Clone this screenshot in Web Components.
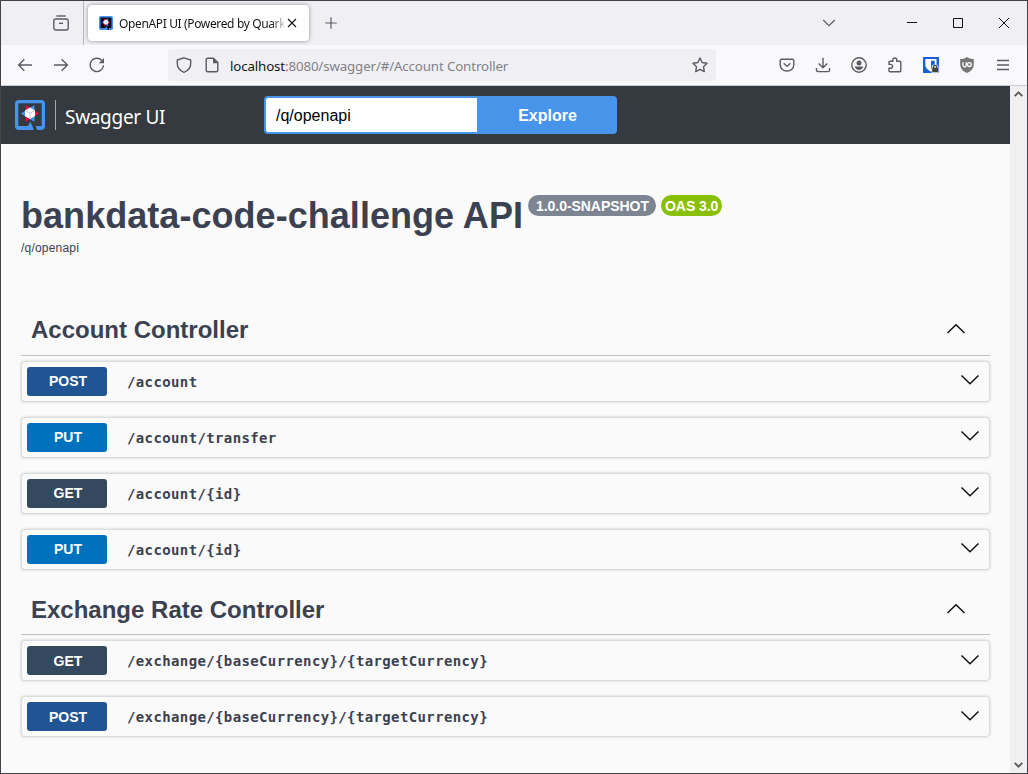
<!DOCTYPE html>
<html lang="en">
<head>
<meta charset="utf-8">
<title>OpenAPI UI (Powered by Quarkus)</title>
<style>
html, body { margin: 0; height: 100%; overflow: hidden; }
body { font-family: "Liberation Sans", Arial, sans-serif; }
</style>
</head>
<body>
<browser-window>
  <tab-strip slot="tabs"></tab-strip>
  <nav-bar slot="nav"></nav-bar>
  <swagger-topbar></swagger-topbar>
  <api-info></api-info>
  <api-section heading="Account Controller">
    <api-operation method="POST">/account</api-operation>
    <api-operation method="PUT">/account/transfer</api-operation>
    <api-operation method="GET">/account/{id}</api-operation>
    <api-operation method="PUT">/account/{id}</api-operation>
  </api-section>
  <api-section heading="Exchange Rate Controller" class="second">
    <api-operation method="GET">/exchange/{baseCurrency}/{targetCurrency}</api-operation>
    <api-operation method="POST">/exchange/{baseCurrency}/{targetCurrency}</api-operation>
  </api-section>
</browser-window>
<script>
const define = (name, render) => customElements.define(name, class extends HTMLElement {
  constructor() { super(); this.attachShadow({ mode: 'open' }); }
  connectedCallback() { this.shadowRoot.innerHTML = render(this); }
});

const quarkus = bg => `<rect width="30" height="30" rx="4" fill="#4695eb"/><path d="M3.300 3.300h23.400v22.700H3.300z" fill="${bg}"/><path d="M15.300 21.500L19 30h-8z" fill="#4695eb"/><path d="M17.300 26h3.200l1.700 4H19z" fill="${bg}"/>
<path d="M10.600 5.200l4.400 2.500-4.500 3zM24.200 13.500l-4.700-3v6zM10.600 21.800l-.3-5.200 4.700 2.700z" fill="#ff004a"/><path d="M19.400 5.200L15 7.700l4.500 3zM5.800 13.500l4.700-3v6zM19.400 21.800l.3-5.200-4.700 2.700z" fill="#4695eb"/><path d="M15 7.600l5 2.900v5.700L15 19l-5-2.800v-5.700z" fill="#fff"/><path d="M10 10.600l5 2.700 5-2.700M15 13.300V19" stroke="#bcc3cf" fill="none" stroke-width=".9"/>`;

const icons = {
  archive: '<path d="M3.3 1h9.4"/><rect x=".8" y="4" width="14.4" height="11" rx="2"/><path d="M6 8.3h4"/>',
  close: '<path d="M4 4l8 8M12 4l-8 8" stroke-width="1.1"/>',
  plus: '<path d="M8 2.2v11.6M2.2 8h11.6" stroke-width="1.2"/>',
  chevron: '<path d="M2.2 5l5.8 5.7L13.8 5" stroke-width="1.2"/>',
  minimize: '<path d="M3 7.5h10" stroke-width="1" shape-rendering="crispEdges"/>',
  maximize: '<path d="M3.5 3.5h9v9h-9z" stroke-width="1"/>',
  quit: '<path d="M3 3l10 10M13 3L3 13" stroke-width="1"/>',
  back: '<path d="M15 8H1.6M7.3 2.3L1.6 8l5.7 5.7"/>',
  forward: '<path d="M1 8h13.4M8.7 2.3L14.4 8l-5.7 5.7"/>',
  reload: '<path d="M12.7 3.3A6.7 6.7 0 1 0 14.5 8.3"/><path d="M15 1v5.3H9.7z" fill="currentColor" stroke="none"/>',
  shield: '<path d="M8 .8L14.7 3v3.5c0 4.2-2.6 7.3-6.7 8.8C3.9 13.8 1.3 10.7 1.3 6.5V3z"/>',
  page: '<path d="M3.5 1.2h6L13.8 5.500v7.8c0 .8-.6 1.500-1.500 1.500H3.7c-.8 0-1.500-.7-1.500-1.500V2.700c0-.8.6-1.500 1.300-1.500z"/><path d="M9 1v5.200h5z" fill="currentColor" stroke="none"/>',
  star: '<path d="M8 1l2.100 4.500 4.900.7-3.500 3.500.8 4.900L8 12.300l-4.300 2.300.8-4.900L1 6.200l4.900-.7z" stroke-linejoin="round"/>',
  pocket: '<path d="M2.700 2.200h10.600c.9 0 1.500.6 1.500 1.500v4c0 3.800-3 6.300-6.800 6.300S1.200 11.500 1.200 7.700v-4c0-.9.6-1.500 1.500-1.500z"/><path d="M4.700 6.300L8 9.400l3.300-3.100"/>',
  download: '<path d="M8 .8v9.500M3.700 6.500L8 10.800l4.300-4.300M1.500 11v2.300c0 .7.600 1.300 1.300 1.300h10.400c.7 0 1.300-.6 1.300-1.300V11"/>',
  account: '<circle cx="8" cy="8" r="7.200"/><circle cx="8" cy="5.900" r="2.500" fill="currentColor" stroke="none"/><path d="M3.800 9.500h8.400c-.4 2.200-2 3.500-4.200 3.500s-3.800-1.300-4.200-3.500z" fill="currentColor" stroke="none"/>',
  puzzle: '<path d="M2 5.200c0-.6.400-1 1-1h2.800V3a2 2 0 0 1 4 0v1.200h3c.6 0 1 .4 1 1v8.600c0 .6-.4 1-1 1H3c-.6 0-1-.4-1-1v-2.600h1.700a1.900 1.900 0 0 0 0-3.800H2z"/>',
  bitwarden: '<rect width="16" height="16" rx=".5" fill="#175ddc" stroke="none"/><path d="M2.300 2h11.200v6c0 3-2.500 5-5.600 6.700C4.700 13 2.300 11 2.300 8z" fill="#fff" stroke="none"/><path d="M8 3.700h3.700v4.600c0 1.500-1.500 2.700-3.700 4z" fill="#175ddc" stroke="none"/><path d="M8.600 16V10l1-2.200h4.800l1.200 2.200v6z" fill="#dfe6f5" stroke="none"/><rect x="9.200" y="10.700" width="6" height="4.500" fill="#444" stroke="none"/><path d="M10.500 11V9.700c0-1.800 3.300-1.800 3.300 0V11" stroke="#444" stroke-width="1.200"/>',
  ublock: '<path d="M8 0c2 1.500 4 2 6.800 2v5c0 4.500-2.500 7-6.800 9-4.300-2-6.800-4.500-6.800-9V2C4 2 6 1.500 8 0z" fill="#777" stroke="none"/><path d="M4 5.300v3c0 2 3.200 2 3.200 0v-3" stroke="#fff" stroke-width="1.300"/><circle cx="10.400" cy="7.600" r="1.900" stroke="#fff" stroke-width="1.300"/>',
  menu: '<path d="M2 3.500h12M2 8h12M2 12.500h12" stroke-width="1.300"/>',
  quarkus: '<g transform="scale(.533)" stroke="none">' + quarkus('#000a1c') + '</g>'
};
define('ui-icon', e => `<style>
:host{display:block;width:16px;height:16px;flex:none;color:#5b5b66}
svg{display:block;width:100%;height:100%;overflow:visible}
</style><svg viewBox="0 0 16 16" fill="none" stroke="currentColor" stroke-width="1.4">${icons[e.getAttribute('name')]}</svg>`);

define('browser-window', () => `<style>
:host{display:flex;flex-direction:column;box-sizing:border-box;width:1028px;height:774px;border:1px solid #444247;background:#fafafa}
.view{display:flex;flex:1;min-height:0;border-top:1px solid #c8ccce}
main{flex:1;min-width:0;overflow:hidden}
aside{width:17px;background:#f0f0f0;display:flex;flex-direction:column;justify-content:space-between;box-sizing:border-box;padding:5px 4px 5px}
aside svg{width:9px;height:6px}
</style><slot name="tabs"></slot><slot name="nav"></slot>
<div class="view"><main><slot></slot></main><aside>
<svg viewBox="0 0 9 6"><path d="M.7 5.200L4.500 1.400l3.800 3.800" fill="none" stroke="#5c5c5c" stroke-width="1.900"/></svg>
<svg viewBox="0 0 9 6"><path d="M.7.8l3.800 3.800L8.300.8" fill="none" stroke="#5c5c5c" stroke-width="1.900"/></svg>
</aside></div>`);

define('tab-strip', () => `<style>
:host{display:flex;align-items:center;height:44px;flex:none;background:#f0f0f4;font:12px "Noto Sans","Open Sans",sans-serif;color:#15141a}
.tools{width:83px;height:44px;box-sizing:border-box;border-right:1px solid #b5b5ba;padding:14px 0 0 52px}
.tab{display:flex;align-items:center;box-sizing:border-box;width:221px;height:36px;margin-left:4px;border-radius:4px;background:#fff;box-shadow:0 0 4px rgba(0,0,0,.4);padding-left:11px}
.name{width:165px;margin-left:6px;white-space:nowrap;letter-spacing:-.36px;-webkit-mask-image:linear-gradient(90deg,#000 152px,rgba(0,0,0,.2) 165px)}
.tab ui-icon:first-child{width:14px;height:14px}
.x{color:#15141a}
.add{margin-left:14px}
.list{margin-left:482px}
.win{color:#111;margin-left:30px}
</style><div class="tools"><ui-icon name="archive"></ui-icon></div>
<div class="tab"><ui-icon name="quarkus"></ui-icon><span class="name">OpenAPI UI (Powered by Quark</span><ui-icon class="x" name="close"></ui-icon></div>
<ui-icon class="add" name="plus"></ui-icon><ui-icon class="list" name="chevron"></ui-icon>
<ui-icon class="win" name="minimize" style="margin-left:67px"></ui-icon><ui-icon class="win" name="maximize"></ui-icon><ui-icon class="win" name="quit"></ui-icon>`);

define('nav-bar', () => `<style>
:host{display:flex;align-items:center;height:40px;flex:none;background:#f9f9fb;box-sizing:border-box;padding-left:16px;gap:20px}
.url{display:flex;align-items:center;box-sizing:border-box;width:548px;height:32px;margin-left:43px;padding:0 8px;border-radius:4px;background:#f0f0f4;font:13.300px "Noto Sans","Open Sans",sans-serif;color:#808087}
.url span{flex:1;margin-left:10px;padding-top:2px;white-space:pre;letter-spacing:-.13px}
b{font-weight:400;color:#15141a}
.page{margin-left:12px}
.pocket{margin-left:43px}
</style><ui-icon name="back"></ui-icon><ui-icon name="forward"></ui-icon><ui-icon name="reload"></ui-icon>
<div class="url"><ui-icon name="shield"></ui-icon><ui-icon class="page" name="page"></ui-icon><span><b>localhost</b>:8080/swagger/#/Account Controller</span><ui-icon name="star"></ui-icon></div>
<ui-icon class="pocket" name="pocket"></ui-icon><ui-icon name="download"></ui-icon><ui-icon name="account"></ui-icon><ui-icon name="puzzle"></ui-icon><ui-icon name="bitwarden"></ui-icon><ui-icon name="ublock"></ui-icon><ui-icon name="menu"></ui-icon>`);

define('swagger-topbar', () => `<style>
:host{display:flex;align-items:center;height:58px;box-sizing:border-box;background:#343a40;padding-left:14px;color:#fff}
.logo{width:30px;height:30px}
.name{box-sizing:border-box;width:209px;height:30px;border-left:1px solid #a6a8ab;margin-left:10px;padding:4px 0 0 9px;font:19px/27px "Noto Sans","Open Sans",sans-serif;letter-spacing:-.3px;white-space:nowrap}
form{display:flex;width:353px;height:38px}
input{box-sizing:border-box;width:213px;border:2px solid #4695eb;border-right:0;border-radius:4px 0 0 4px;padding:2px 10px 0;font:16px "Liberation Sans",Arial,sans-serif;color:#000;background:#fff}
button{flex:1;border:0;border-radius:0 4px 4px 0;background:#4695eb;color:#fff;font:bold 16px "Liberation Sans",Arial,sans-serif;padding:2px 0 0 1px}
</style><svg class="logo" viewBox="0 0 30 30">${quarkus('#343a40')}</svg><div class="name">Swagger UI</div>
<form><input value="/q/openapi"><button type="button">Explore</button></form>`);

define('api-info', () => `<style>
:host{display:block;height:158px;box-sizing:border-box;padding:51px 20px 0;color:#3b4151}
.title{display:flex;align-items:flex-start}
h1{margin:0;font-size:36px;line-height:42px;white-space:nowrap;letter-spacing:.045px;width:501px}
.badge{box-sizing:border-box;height:21px;border-radius:11px;color:#fff;background:#7d8492;font-weight:bold;font-size:14px;line-height:22px;white-space:nowrap;padding-left:8px;width:128px;margin-left:6px;letter-spacing:-.05px}
.oas{background:#89bf04;width:61px;margin-left:5px;padding-left:4px}
.path{font-size:12px;line-height:16px;margin-top:3px;letter-spacing:.2px}
</style><div class="title"><h1>bankdata-code-challenge API</h1><span class="badge">1.0.0-SNAPSHOT</span><span class="badge oas">OAS 3.0</span></div><div class="path">/q/openapi</div>`);

define('api-section', e => `<style>
:host{display:block;padding:0 20px;color:#3b4151;--label-drop:0px;--arrow-lift:-6px}
:host(.second){margin-top:10px;--label-drop:1px;--arrow-lift:-4px}
header{display:flex;align-items:center;justify-content:space-between;box-sizing:border-box;height:54px;padding:0 24px 0 10px;border-bottom:1px solid #bfc0c2}
h2{margin:0;padding-top:2px;font-size:24px;line-height:28px}
:host(.second) header{padding-top:2px;margin-top:11px}
:host(.second) h2{padding-top:3px}
svg{width:20px;height:20px}
.ops{display:flex;flex-direction:column;gap:15px;padding-top:5px}
</style><header><h2>${e.getAttribute('heading')}</h2><svg viewBox="0 0 20 20"><path d="M1.500 14L10 5.800l8.500 8.200" fill="none" stroke="#111" stroke-width="1.500"/></svg></header><div class="ops"><slot></slot></div>`);

const methodColors = { POST: '#215493', PUT: '#0071bd', GET: '#34495e' };
define('api-operation', e => `<style>
:host{display:flex;align-items:center;box-sizing:border-box;height:41px;padding:0 9px 0 5px;border:1px solid #d9dddd;border-radius:4px;box-shadow:0 0 3px rgba(0,0,0,.19);background:#fafafa}
.method{box-sizing:border-box;width:80px;height:29px;padding:var(--label-drop) 0 0 2px;border-radius:3px;color:#fff;text-align:center;font-size:14px;line-height:29px;font-weight:bold;background:${methodColors[e.getAttribute('method')]}}
.path{flex:1;margin-left:20px;font:bold 14px "DejaVu Sans Mono",monospace;letter-spacing:.375px;white-space:nowrap}
svg{width:20px;height:20px;margin-top:var(--arrow-lift)}
</style><span class="method">${e.getAttribute('method')}</span><span class="path"><slot></slot></span><svg viewBox="0 0 20 20"><path d="M1.500 6.500l8.500 8.200 8.500-8.200" fill="none" stroke="#111" stroke-width="1.500"/></svg>`);
</script>
</body>
</html>
